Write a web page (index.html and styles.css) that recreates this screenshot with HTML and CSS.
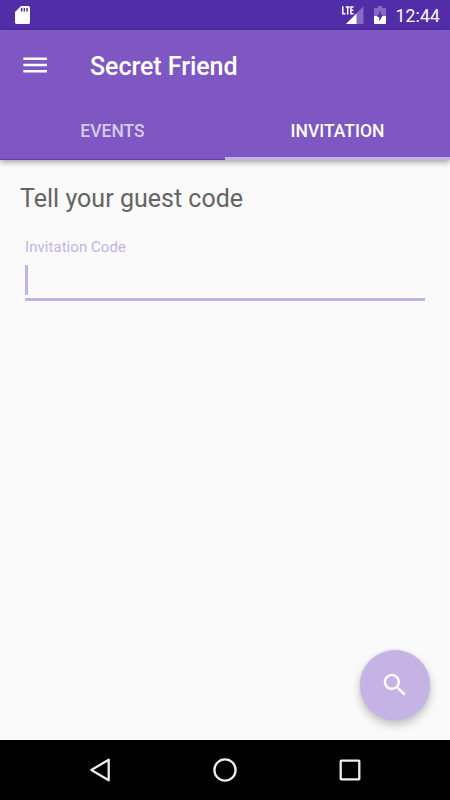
FILE: index.html
```html
<!doctype html>
<html lang="en">
    <head>
        <meta charset="utf-8" />
        <title>Secret Friend</title>
        <link rel="stylesheet" href="styles.css">
    </head>
    <body>
        <div class="screen">
            <div class="status-bar">
                <svg class="sd-card" width="16" height="20" viewBox="0 0 16 20">
                    <path fill="#fff" fill-rule="evenodd" d="M6 1h7.400q1.600 0 1.600 1.600v14.800q0 1.600-1.600 1.600H1.600Q0 19 0 17.400V7zM5.900 3v3.500h1.500V3zM8.600 3v3.500h1.500V3zM11.300 3v3.500h1.500V3z"/>
                </svg>
                <div class="status-icons">
                    <svg class="signal" width="23" height="20" viewBox="0 0 23 20">
                        <path fill="#fff" fill-opacity="0.300" d="M22.500 1.200v17.800H5z"/>
                        <path fill="#fff" d="M15.500 8.500V19H5z"/>
                        <path class="lte" d="M1.800 1.200v7.500h2.700M4.800 1.900h3.800M6.700 1.900v7.500M12.600 1.900H9.900v6.800h2.700M9.900 5.200h2.500"/>
                    </svg>
                    <svg class="battery" width="12" height="20" viewBox="0 0 12 20">
                        <path fill="#fff" fill-opacity="0.300" d="M3.800 1h4.400v2H11q1 0 1 1v7H0V4q0-1 1-1h2.800z"/>
                        <path fill="#fff" d="M0 11h12v7q0 1-1 1H1q-1 0-1-1z"/>
                        <path fill="#512da8" d="M6.800 5.200v4.900h2.200L5.200 16.600v-4.700H3z"/>
                    </svg>
                    <span class="clock">12:44</span>
                </div>
            </div>

            <div class="header">
                <div class="toolbar">
                    <svg class="menu" width="30" height="30" viewBox="0 0 24 24">
                        <path fill="#fff" d="M2.700 18h18.800v-2H2.700v2zm0-5h18.800v-2H2.700v2zm0-7v2h18.800V6H2.700z"/>
                    </svg>
                    <h1>Secret Friend</h1>
                </div>
                <div class="tabs">
                    <div class="tab">EVENTS</div>
                    <div class="tab active">INVITATION</div>
                </div>
            </div>

            <div class="content">
                <h2>Tell your guest code</h2>
                <div class="field">
                    <div class="label">Invitation Code</div>
                    <div class="input"><div class="cursor"></div></div>
                </div>
                <div class="fab">
                    <svg width="30" height="30" viewBox="0 0 24 24">
                        <path fill="#fff" d="M15.500 14h-.790l-.280-.270C15.410 12.590 16 11.110 16 9.500 16 5.910 13.090 3 9.500 3S3 5.910 3 9.500 5.910 16 9.500 16c1.610 0 3.090-.590 4.230-1.570l.270.280v.790l5 4.990L20.490 19l-4.990-5zm-6 0C7.010 14 5 11.990 5 9.500S7.010 5 9.500 5 14 7.010 14 9.500 11.990 14 9.500 14z"/>
                    </svg>
                </div>
            </div>

            <div class="nav-bar">
                <svg width="30" height="30" viewBox="0 0 30 30">
                    <path d="M23.700 4.700v20.600L6.300 15z"/>
                </svg>
                <svg width="30" height="30" viewBox="0 0 30 30">
                    <circle cx="15" cy="15" r="10.600"/>
                </svg>
                <svg width="30" height="30" viewBox="0 0 30 30">
                    <rect x="5.700" y="5.700" width="18.600" height="18.600" rx="0.500"/>
                </svg>
            </div>
        </div>
    </body>
</html>
```

FILE: styles.css
```css
* {
    margin: 0;
    padding: 0;
    box-sizing: border-box;
}

body {
    font-family: Roboto, "Liberation Sans", sans-serif;
    background: #fafafa;
}

svg {
    display: block;
}

.screen {
    display: flex;
    flex-direction: column;
    width: 450px;
    height: 800px;
    overflow: hidden;
}

.status-bar {
    display: flex;
    align-items: center;
    justify-content: space-between;
    height: 30px;
    padding: 0 10px 0 15px;
    background: #512da8;
}

.status-icons {
    display: flex;
    align-items: center;
}

.signal .lte {
    fill: none;
    stroke: #fff;
    stroke-width: 1.5;
}

.battery {
    margin: 0 9px 0 10px;
}

.clock {
    height: 30px;
    color: #fff;
    font-size: 17.5px;
    letter-spacing: 0.2px;
    line-height: 32px;
}

.header {
    position: relative;
    height: 130px;
    background: #7e57c2;
    box-shadow: 0 2px 6px rgba(0, 0, 0, 0.38);
}

.toolbar {
    display: flex;
    align-items: center;
    height: 70px;
    padding: 0 20px;
}

.toolbar h1 {
    margin-left: 40px;
    padding-top: 2px;
    color: #fff;
    font-size: 25px;
    font-weight: 500;
    letter-spacing: -0.05px;
}

.tabs {
    display: flex;
    height: 60px;
}

.tab {
    flex: 1;
    border-bottom: 1px solid #673ab7;
    color: rgba(255, 255, 255, 0.7);
    font-size: 17.5px;
    font-weight: 500;
    line-height: 62px;
    text-align: center;
}

.tab.active {
    border-bottom: 3px solid #c5b3e6;
    color: #fff;
}

.content {
    flex: 1;
    display: flex;
    flex-direction: column;
    padding: 20px;
}

.content h2 {
    color: #646464;
    font-size: 25px;
    font-weight: 400;
    line-height: 38px;
    letter-spacing: 0.02px;
}

.field {
    margin: 19px 5px 0;
}

.label {
    color: #c5b3e6;
    font-size: 15px;
    letter-spacing: 0.05px;
    line-height: 21px;
}

.input {
    height: 43px;
    padding-top: 7px;
    border-bottom: 3px solid #c5b3e6;
}

.cursor {
    width: 2.5px;
    height: 30px;
    background: #c5b3e6;
}

.fab {
    display: flex;
    align-items: center;
    justify-content: center;
    align-self: flex-end;
    width: 70px;
    height: 70px;
    margin-top: auto;
    border-radius: 50%;
    background: #c5b3e6;
    box-shadow: 0 5px 10px rgba(0, 0, 0, 0.24), 0 0 3px rgba(0, 0, 0, 0.1);
}

.nav-bar {
    display: flex;
    justify-content: center;
    align-items: center;
    gap: 95px;
    height: 60px;
    background: #000;
}

.nav-bar svg {
    fill: none;
    stroke: #eee;
    stroke-width: 2.3;
    stroke-linejoin: round;
}
```
